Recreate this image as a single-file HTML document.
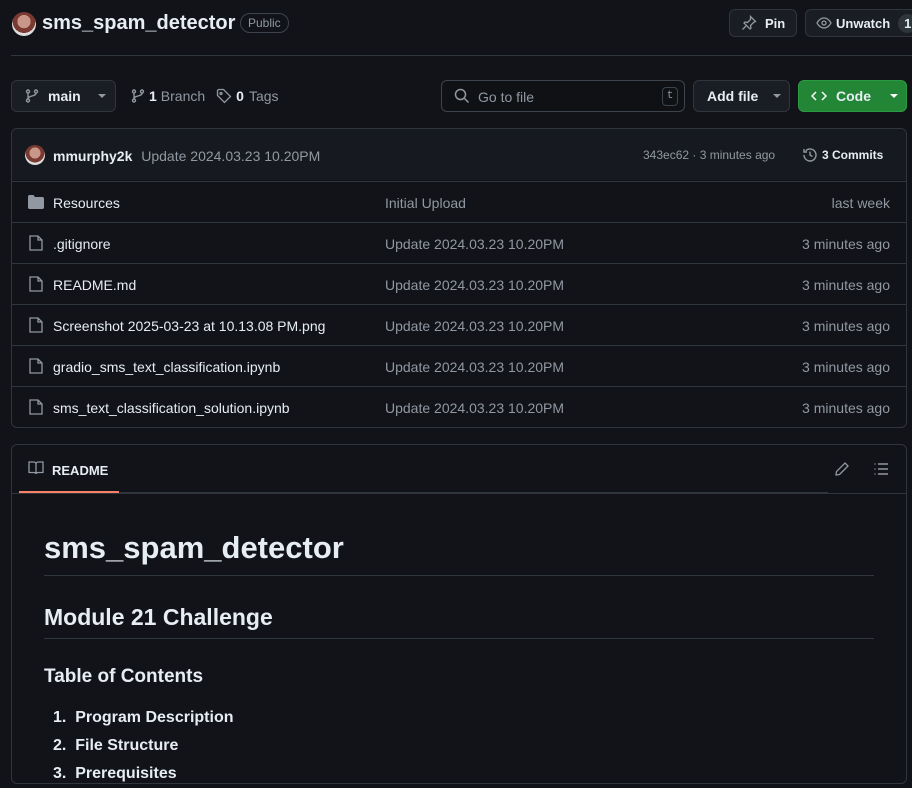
<!DOCTYPE html>
<html><head><meta charset="utf-8"><style>
*{box-sizing:border-box;margin:0;padding:0}
body{width:912px;height:771px;overflow:hidden;background:#111318;font-family:"Liberation Sans",sans-serif;color:#e6edf3;position:relative}
.a{position:absolute}
.btn{position:absolute;border:1px solid #30363d;border-radius:6px;background:#1a1d23;font-size:13px;font-weight:bold;color:#e6edf3;display:flex;align-items:center}
.muted{color:#9198a1}
svg{display:block}
.row{position:absolute;left:12px;width:894px;height:41px;border-top:1px solid #30363d;font-size:14px}
.row span{position:absolute;top:13px}
.av{border-radius:50%;background:radial-gradient(circle at 50% 40%,#c9968a 0 35%,#7a3a32 36% 60%,#ddd 61%)}
</style></head><body>
<div class="a av" style="left:12px;top:12px;width:24px;height:24px"></div>
<div class="a" style="left:42px;top:12px;font-size:20px;font-weight:bold">sms_spam_detector</div>
<div class="a muted" style="left:240px;top:13px;border:1px solid #3d444d;border-radius:10px;padding:2px 7px;font-size:12px">Public</div>
<div class="btn" style="left:729px;top:9px;width:68px;height:28px;padding-left:11px"><svg width="16" height="16" viewBox="0 0 16 16" fill="none" stroke="#9198a1" stroke-width="1.3"><path d="M9.5 1.5l5 5-2 1-3 3 .5 2.5-1 1-6-6 1-1 2.5.5 3-3z M5 11l-3.5 3.5"/></svg><span style="margin-left:8px">Pin</span></div>
<div class="btn" style="left:805px;top:9px;width:120px;height:28px;padding-left:10px"><svg width="16" height="16" viewBox="0 0 16 16" fill="none" stroke="#9198a1" stroke-width="1.3"><path d="M1 8s2.5-5 7-5 7 5 7 5-2.5 5-7 5-7-5-7-5z"/><circle cx="8" cy="8" r="2"/></svg><span style="margin-left:4px">Unwatch</span><span style="margin-left:8px;background:#2f353d;border-radius:10px;padding:2px 6px">1</span></div>
<div class="a" style="left:11px;top:55px;width:901px;height:1px;background:#30363d"></div>
<div class="btn" style="left:11px;top:80px;width:105px;height:32px;padding-left:12px"><svg width="16" height="16" viewBox="0 0 16 16" fill="none" stroke="#9198a1" stroke-width="1.4"><circle cx="4" cy="3.5" r="1.5"/><circle cx="4" cy="12.5" r="1.5"/><circle cx="12" cy="3.5" r="1.5"/><path d="M4 5v6M12 5c0 4-8 2-8 6"/></svg><span style="margin-left:8px;font-size:14px">main</span><span style="margin-left:17px;border:4px solid transparent;border-top-color:#9198a1;margin-top:4px"></span></div>
<div class="a" style="left:130px;top:88px;display:flex;align-items:center;font-size:14px"><svg width="16" height="16" viewBox="0 0 16 16" fill="none" stroke="#9198a1" stroke-width="1.4"><circle cx="4" cy="3.5" r="1.5"/><circle cx="4" cy="12.5" r="1.5"/><circle cx="12" cy="3.5" r="1.5"/><path d="M4 5v6M12 5c0 4-8 2-8 6"/></svg><b style="margin-left:3px">1</b><span class="muted" style="margin-left:4px">Branch</span>
<svg style="margin-left:11px" width="16" height="16" viewBox="0 0 16 16" fill="none" stroke="#9198a1" stroke-width="1.3"><path d="M1.5 2.5v5l7 7 6-6-7-7h-5z"/><circle cx="5" cy="5.5" r="1"/></svg><b style="margin-left:4px">0</b><span class="muted" style="margin-left:5px">Tags</span></div>
<div class="a" style="left:441px;top:80px;width:244px;height:32px;border:1px solid #3d444d;border-radius:6px;background:#0f1115"></div>
<svg class="a" style="left:454px;top:88px" width="16" height="16" viewBox="0 0 16 16" fill="none" stroke="#9198a1" stroke-width="1.5"><circle cx="6.5" cy="6.5" r="5"/><path d="M10.5 10.5l4 4"/></svg>
<div class="a muted" style="left:478px;top:89px;font-size:14px">Go to file</div>
<div class="a muted" style="left:662px;top:87px;width:16px;height:19px;border:1px solid #3d444d;border-radius:4px;font-size:11px;text-align:center;line-height:17px;font-family:'Liberation Mono',monospace">t</div>
<div class="btn" style="left:693px;top:80px;width:97px;height:32px;padding-left:13px;font-size:14px">Add file<span style="margin-left:15px;border:4px solid transparent;border-top-color:#9198a1;margin-top:4px"></span></div>
<div class="btn" style="left:798px;top:80px;width:109px;height:32px;padding-left:12px;font-size:14px;background:#238636;border-color:#2c9a42"><svg width="16" height="16" viewBox="0 0 16 16" fill="none" stroke="#fff" stroke-width="1.5"><path d="M5 4L1 8l4 4M11 4l4 4-4 4"/></svg><span style="margin-left:9px">Code</span><span style="margin-left:19px;border:4px solid transparent;border-top-color:#fff;margin-top:4px"></span></div>
<div class="a" style="left:11px;top:128px;width:896px;height:300px;border:1px solid #30363d;border-radius:6px"></div>
<div class="a" style="left:12px;top:129px;width:894px;height:51px;background:#161a20;border-radius:6px 6px 0 0"></div>
<div class="a av" style="left:25px;top:145px;width:20px;height:20px"></div>
<div class="a" style="left:53px;top:148px;font-size:14px"><b>mmurphy2k</b> <span class="muted" style="margin-left:5px">Update 2024.03.23 10.20PM</span></div>
<div class="a muted" style="left:643px;top:148px;font-size:12px">343ec62 · 3 minutes ago</div>
<svg class="a" style="left:802px;top:147px" width="16" height="16" viewBox="0 0 16 16" fill="none" stroke="#9198a1" stroke-width="1.4"><path d="M2 8a6 6 0 1 0 1.8-4.3M2 2v3h3M8 4.5V8l2.5 1.5"/></svg>
<div class="a" style="left:822px;top:148px;font-size:12px;font-weight:bold">3 Commits</div>
<div class="row" style="top:181px"><svg class="a" style="left:16px;top:13px" width="16" height="14" viewBox="0 0 16 14"><path d="M0 1.5C0 .7.7 0 1.5 0h4l1.5 2h7.5c.8 0 1.5.7 1.5 1.5v9c0 .8-.7 1.5-1.5 1.5h-13C.7 14 0 13.3 0 12.5z" fill="#9198a1"/></svg><span style="left:41px">Resources</span><span class="muted" style="left:373px">Initial Upload</span><span class="muted" style="right:16px">last week</span></div>
<div class="row" style="top:222px"><svg class="a" style="left:17px;top:12px" width="14" height="16" viewBox="0 0 14 16" fill="none" stroke="#9198a1" stroke-width="1.3"><path d="M1 1h8l4 4v10H1zM9 1v4h4"/></svg><span style="left:41px">.gitignore</span><span class="muted" style="left:373px">Update 2024.03.23 10.20PM</span><span class="muted" style="right:16px">3 minutes ago</span></div>
<div class="row" style="top:263px"><svg class="a" style="left:17px;top:12px" width="14" height="16" viewBox="0 0 14 16" fill="none" stroke="#9198a1" stroke-width="1.3"><path d="M1 1h8l4 4v10H1zM9 1v4h4"/></svg><span style="left:41px">README.md</span><span class="muted" style="left:373px">Update 2024.03.23 10.20PM</span><span class="muted" style="right:16px">3 minutes ago</span></div>
<div class="row" style="top:304px"><svg class="a" style="left:17px;top:12px" width="14" height="16" viewBox="0 0 14 16" fill="none" stroke="#9198a1" stroke-width="1.3"><path d="M1 1h8l4 4v10H1zM9 1v4h4"/></svg><span style="left:41px">Screenshot 2025-03-23 at 10.13.08 PM.png</span><span class="muted" style="left:373px">Update 2024.03.23 10.20PM</span><span class="muted" style="right:16px">3 minutes ago</span></div>
<div class="row" style="top:345px"><svg class="a" style="left:17px;top:12px" width="14" height="16" viewBox="0 0 14 16" fill="none" stroke="#9198a1" stroke-width="1.3"><path d="M1 1h8l4 4v10H1zM9 1v4h4"/></svg><span style="left:41px">gradio_sms_text_classification.ipynb</span><span class="muted" style="left:373px">Update 2024.03.23 10.20PM</span><span class="muted" style="right:16px">3 minutes ago</span></div>
<div class="row" style="top:386px"><svg class="a" style="left:17px;top:12px" width="14" height="16" viewBox="0 0 14 16" fill="none" stroke="#9198a1" stroke-width="1.3"><path d="M1 1h8l4 4v10H1zM9 1v4h4"/></svg><span style="left:41px">sms_text_classification_solution.ipynb</span><span class="muted" style="left:373px">Update 2024.03.23 10.20PM</span><span class="muted" style="right:16px">3 minutes ago</span></div>
<div class="a" style="left:11px;top:444px;width:896px;height:340px;border:1px solid #30363d;border-radius:6px"></div>
<svg class="a" style="left:28px;top:461px" width="16" height="14" viewBox="0 0 16 14" fill="none" stroke="#9198a1" stroke-width="1.3"><path d="M1 1h4.5c1.4 0 2.5.8 2.5 2v10c0-1-1-1.5-2.5-1.5H1zM15 1h-4.5C9.1 1 8 1.8 8 3v10c0-1 1-1.5 2.5-1.5H15z"/></svg>
<div class="a" style="left:52px;top:463px;font-size:13px;font-weight:bold">README</div>
<div class="a" style="left:19px;top:491px;width:100px;height:2px;background:#f78166"></div>
<div class="a" style="left:119px;top:492px;width:709px;height:1px;background:#30363d"></div>
<div class="a" style="left:12px;top:493px;width:894px;height:1px;background:#30363d"></div>
<svg class="a" style="left:834px;top:461px" width="16" height="16" viewBox="0 0 16 16" fill="none" stroke="#9198a1" stroke-width="1.3"><path d="M11 2l3 3-8.5 8.5L2 14l.5-3.5z"/></svg>
<svg class="a" style="left:873px;top:461px" width="16" height="16" viewBox="0 0 16 16" fill="none" stroke="#9198a1" stroke-width="1.4"><path d="M5 3h10M5 8h10M5 13h10M1.5 3h1M1.5 8h1M1.5 13h1"/></svg>
<div class="a" style="left:44px;top:530px;font-size:31px;font-weight:bold">sms_spam_detector</div>
<div class="a" style="left:44px;top:575px;width:830px;height:1px;background:#30363d"></div>
<div class="a" style="left:44px;top:604px;font-size:23px;font-weight:bold">Module 21 Challenge</div>
<div class="a" style="left:44px;top:638px;width:830px;height:1px;background:#30363d"></div>
<div class="a" style="left:44px;top:666px;font-size:19px;font-weight:bold">Table of Contents</div>
<div class="a" style="left:53px;top:704px;font-size:16px;font-weight:bold;line-height:28px">1.&nbsp; Program Description<br>2.&nbsp; File Structure<br>3.&nbsp; Prerequisites</div>
</body></html>
